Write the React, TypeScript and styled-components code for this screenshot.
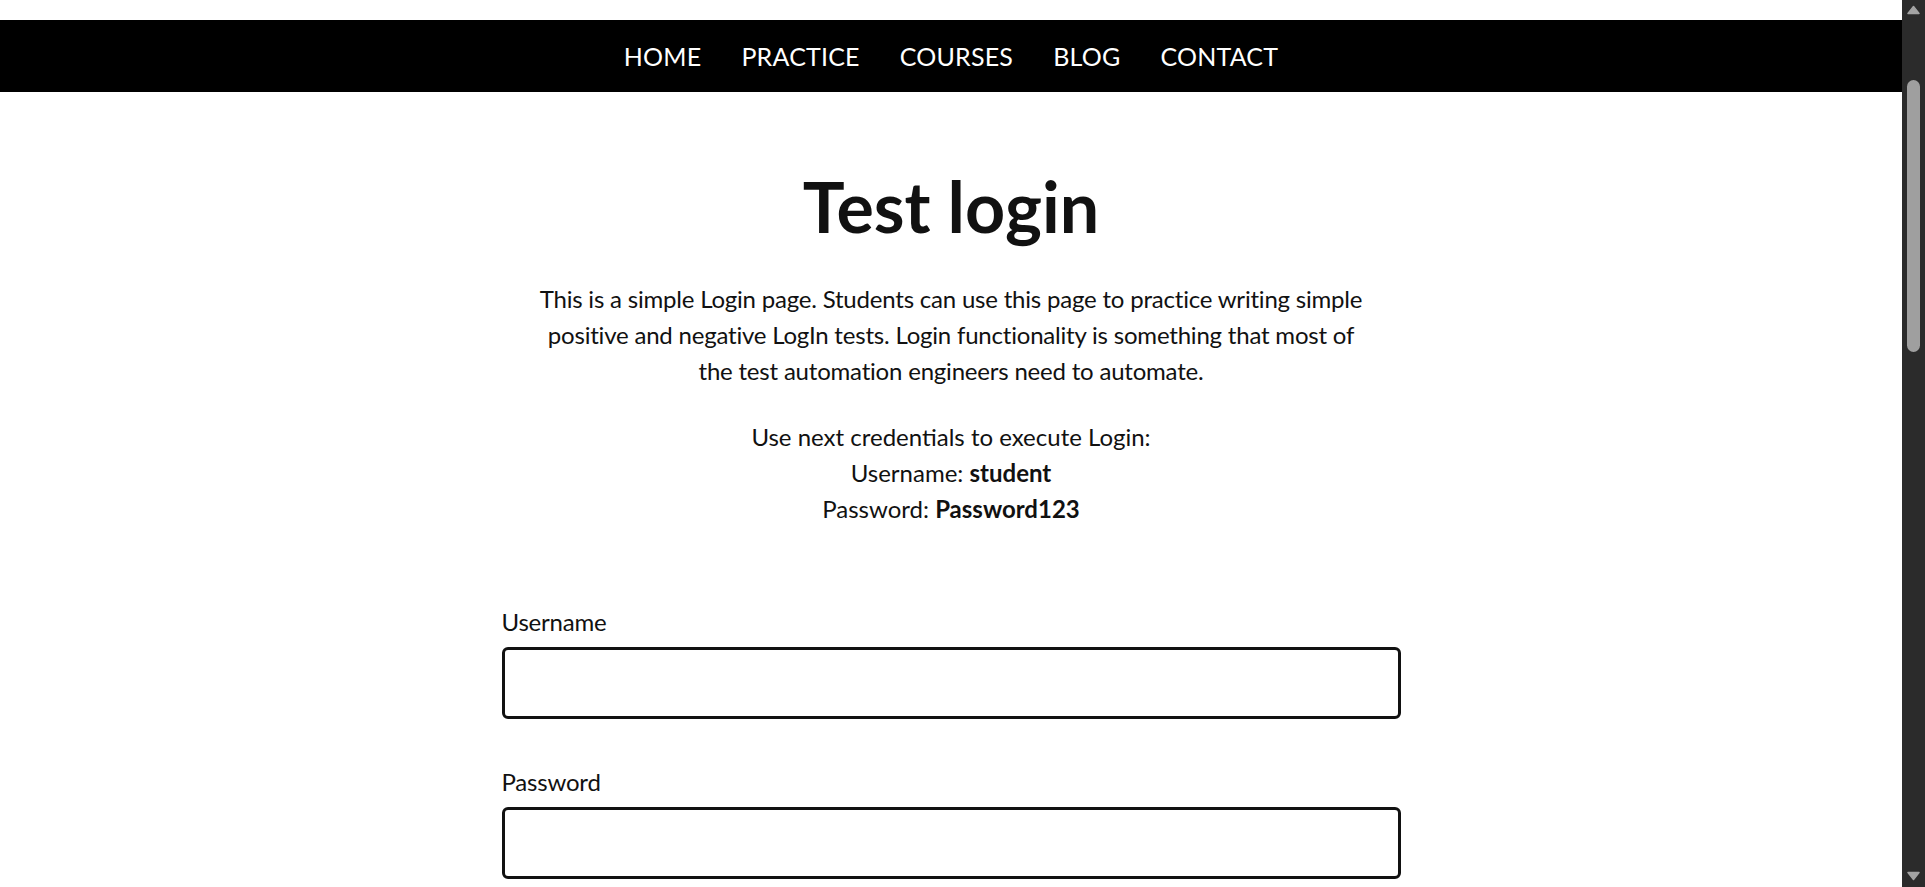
import styled, { createGlobalStyle } from "styled-components";

const GlobalStyle = createGlobalStyle`
  html {
    background: #fff;
  }
  body {
    margin: 0;
    background: #fff;
    color: #111;
    font-family: Lato, "Noto Sans", "Liberation Sans", sans-serif;
  }
  * {
    box-sizing: border-box;
  }
`;

const navItems = ["HOME", "PRACTICE", "COURSES", "BLOG", "CONTACT"];

const Page = styled.div`
  min-height: 2576px;
  padding-right: 23px;
  display: flex;
  flex-direction: column;
`;

const Header = styled.header`
  padding-top: 20px;
  background: #fff;
`;

const NavBar = styled.nav`
  height: 72px;
  background: #000;
  display: flex;
  align-items: center;
  justify-content: center;
  gap: 40px;
`;

const NavLink = styled.a`
  color: #fff;
  font-size: 25px;
  letter-spacing: 0.2px;
  text-decoration: none;
  cursor: pointer;
`;

const Main = styled.main`
  flex: 1;
  display: flex;
  flex-direction: column;
  align-items: center;
  padding: 72px 0 80px;
`;

const Section = styled.section`
  width: 899px;
  display: flex;
  flex-direction: column;
  align-items: center;
  text-align: center;
`;

const Title = styled.h2`
  margin: 0 0 33px;
  font-size: 70px;
  font-weight: 700;
  line-height: 84px;
  color: #111;
`;

const Text = styled.p<{ $gap?: number; $spacing?: number }>`
  margin: 0 0 ${p => p.$gap ?? 30}px;
  max-width: 840px;
  font-size: 24px;
  line-height: 36px;
  letter-spacing: ${p => p.$spacing ?? -0.2}px;
  color: #111;
`;

const Form = styled.form`
  width: 100%;
  display: flex;
  flex-direction: column;
  gap: 45px;
  text-align: left;
`;

const Field = styled.div`
  display: flex;
  flex-direction: column;
  gap: 7px;
`;

const Label = styled.label`
  font-size: 24px;
  line-height: 36px;
  letter-spacing: -0.2px;
  color: #111;
`;

const Input = styled.input`
  width: 100%;
  height: 72px;
  border: 3px solid #111;
  border-radius: 6px;
  background: #fff;
  color: #111;
  font-family: inherit;
  font-size: 24px;
  padding: 0 16px;
  outline: none;
`;

const SubmitButton = styled.button`
  align-self: flex-start;
  padding: 14px 40px;
  border: none;
  border-radius: 6px;
  background: #111;
  color: #fff;
  font-family: inherit;
  font-size: 24px;
  cursor: pointer;
`;

/* window scrollbar as seen in the screenshot, drawn over the right edge */
const Scrollbar = styled.div`
  position: fixed;
  top: 0;
  right: 0;
  width: 23px;
  height: 100vh;
  background: #2b2b2b;
  display: flex;
  flex-direction: column;
  align-items: center;
  padding: 5px 0 6px;
`;

const ScrollThumb = styled.div`
  width: 13px;
  height: 272px;
  margin-top: 65px;
  border-radius: 7px;
  background: #9f9f9f;
`;

const ScrollArrow = styled.svg<{ $down?: boolean }>`
  display: block;
  margin-top: ${p => (p.$down ? "auto" : "0")};
  transform: ${p => (p.$down ? "rotate(180deg)" : "none")};
`;

const Arrow = ({ down }: { down?: boolean }) => (
  <ScrollArrow $down={down} width="13" height="10" viewBox="0 0 13 10">
    <path
      d="M6.5 1.5 L12 8.5 L1 8.5 Z"
      fill="#a3a3a3"
      stroke="#a3a3a3"
      strokeWidth="1.5"
      strokeLinejoin="round"
    />
  </ScrollArrow>
);

export default function App() {
  return (
    <Page>
      <GlobalStyle />
      <Header>
        <NavBar>
          {navItems.map(item => (
            <NavLink key={item}>{item}</NavLink>
          ))}
        </NavBar>
      </Header>
      <Main>
        <Section>
          <Title>Test login</Title>
          <Text>
            This is a simple Login page. Students can use this page to practice
            writing simple positive and negative LogIn tests. Login
            functionality is something that most of the test automation
            engineers need to automate.
          </Text>
          <Text $gap={77} $spacing={0}>
            Use next credentials to execute Login:
            <br />
            Username: <b>student</b>
            <br />
            Password: <b>Password123</b>
          </Text>
          <Form onSubmit={e => e.preventDefault()}>
            <Field>
              <Label htmlFor="username">Username</Label>
              <Input id="username" type="text" />
            </Field>
            <Field>
              <Label htmlFor="password">Password</Label>
              <Input id="password" type="password" />
            </Field>
            <SubmitButton type="submit">Submit</SubmitButton>
          </Form>
        </Section>
      </Main>
      <Scrollbar aria-hidden="true">
        <Arrow />
        <ScrollThumb />
        <Arrow down />
      </Scrollbar>
    </Page>
  );
}
